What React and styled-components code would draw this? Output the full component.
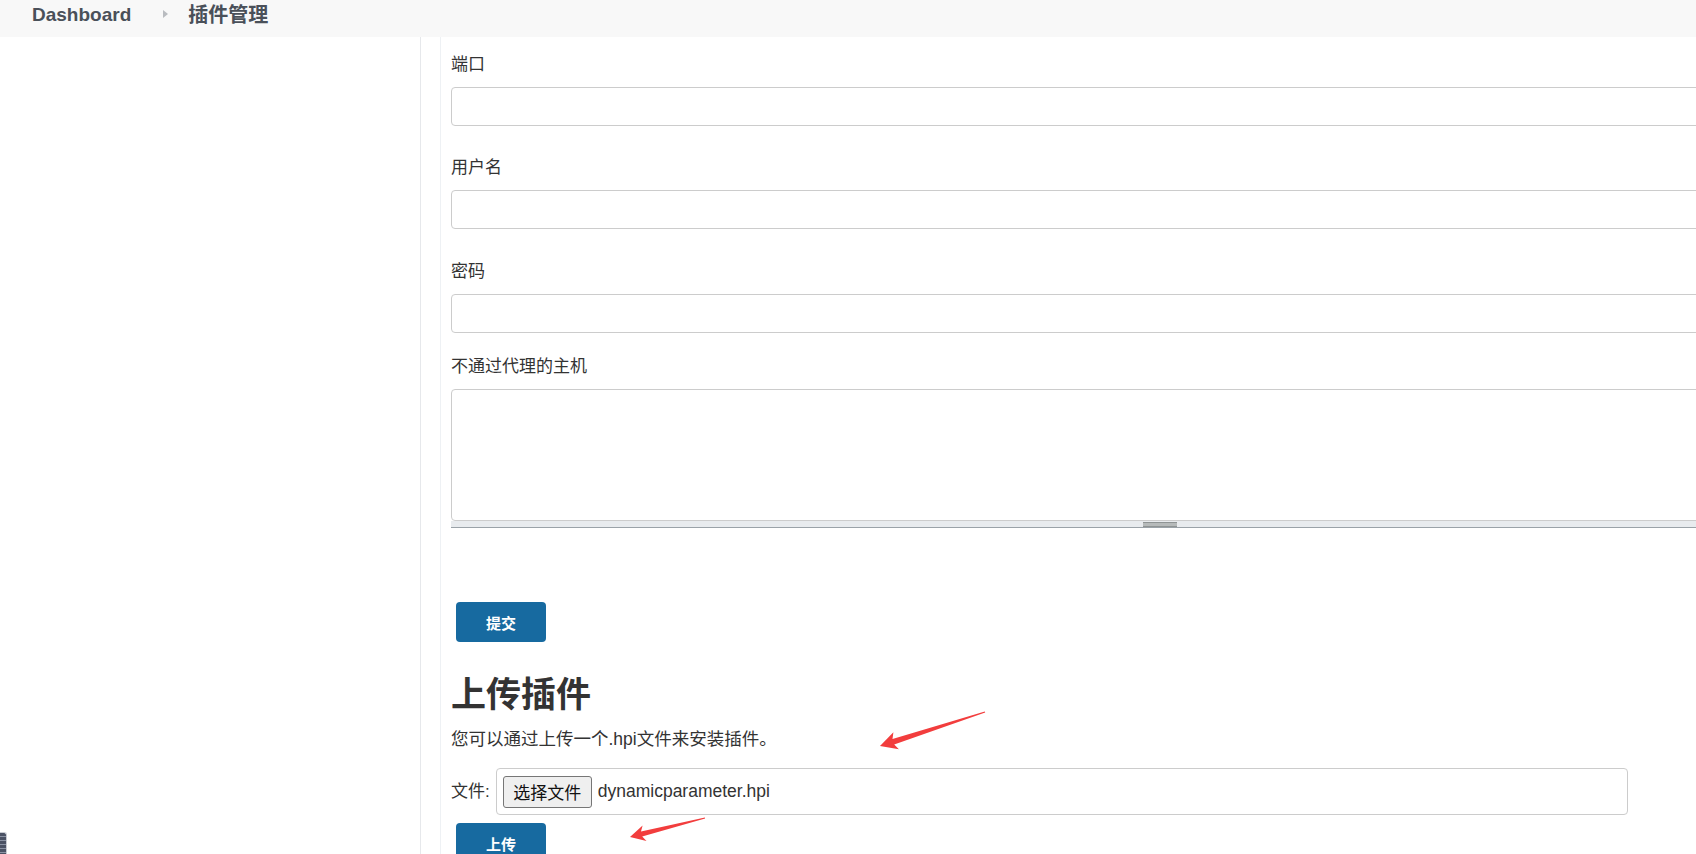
import React from "react";
import styled, { createGlobalStyle } from "styled-components";

const GlobalStyle = createGlobalStyle`
    html, body {
        margin: 0;
        padding: 0;
        background: #fff;
        overflow: hidden;
    }

    body {
        font-family: "Liberation Sans", "Noto Sans CJK SC", sans-serif;
        color: #333;
    }
`;

// arrow drawn as one tapered polygon, tail -> tip
const arrowPoints = (x1, y1, x2, y2, head, headHalf, shaft) => {
    const dx = x2 - x1;
    const dy = y2 - y1;
    const len = Math.hypot(dx, dy);
    const ux = dx / len;
    const uy = dy / len;
    const nx = -uy;
    const ny = ux;
    const bx = x2 - ux * head;
    const by = y2 - uy * head;
    const kx = x2 - ux * (head - 3);
    const ky = y2 - uy * (head - 3);
    const pts = [
        [x1 + nx * 0.6, y1 + ny * 0.6],
        [kx + nx * shaft, ky + ny * shaft],
        [bx + nx * headHalf, by + ny * headHalf],
        [x2, y2],
        [bx - nx * headHalf, by - ny * headHalf],
        [kx - nx * shaft, ky - ny * shaft],
        [x1 - nx * 0.6, y1 - ny * 0.6],
    ];
    return pts.map((p) => p.map((v) => v.toFixed(1)).join(",")).join(" ");
};

const fields = [
    { label: "端口", gap: 28 },
    { label: "用户名", gap: 29 },
    { label: "密码", gap: 20 },
];

const App = () => {
    return (
        <>
            <GlobalStyle />
            <Page>
                <Header>
                    <Crumb href="#" $size={19}>Dashboard</Crumb>
                    <Separator>
                        <svg width="5" height="8" viewBox="0 0 5 8">
                            <path d="M0 0 L5 4 L0 8 Z" fill="#b9bcc0" />
                        </svg>
                    </Separator>
                    <Crumb href="#" $size={20}>插件管理</Crumb>
                </Header>

                <Body>
                    <Sidebar />
                    <Main>
                        {fields.map((f) => (
                            <Field key={f.label} $gap={f.gap}>
                                <FieldLabel>{f.label}</FieldLabel>
                                <TextInput type="text" />
                            </Field>
                        ))}

                        <Field $gap={74}>
                            <FieldLabel>不通过代理的主机</FieldLabel>
                            <TextArea />
                            <ResizeBar>
                                <Grip />
                            </ResizeBar>
                        </Field>

                        <PrimaryButton>提交</PrimaryButton>

                        <SectionTitle>上传插件</SectionTitle>
                        <Description>您可以通过上传一个.hpi文件来安装插件。</Description>

                        <FileRow>
                            <FileLabel>文件:</FileLabel>
                            <FileBox>
                                <ChooseButton>选择文件</ChooseButton>
                                <FileName>dynamicparameter.hpi</FileName>
                            </FileBox>
                        </FileRow>

                        <UploadButton>上传</UploadButton>
                    </Main>
                </Body>

                <Annotations width="1696" height="854" viewBox="0 0 1696 854">
                    <polygon points={arrowPoints(985, 712, 880, 746, 17, 9, 2.8)} fill="#f23d3d" />
                    <polygon points={arrowPoints(705, 818, 630, 837, 15, 8, 2.5)} fill="#f23d3d" />
                </Annotations>

                <DockTab />
            </Page>
        </>
    );
};

export default App;

const Page = styled.div`
    position: relative;
    width: 1696px;
    height: 854px;
    overflow: hidden;
    display: flex;
    flex-direction: column;
`;

const Header = styled.header`
    flex: 0 0 37px;
    box-sizing: border-box;
    background: #f8f8f8;
    display: flex;
    align-items: flex-start;
    padding: 1px 0 0 32px;
`;

const Crumb = styled.a`
    font-size: ${({ $size }) => $size}px;
    font-weight: 700;
    line-height: 28px;
    color: #4a5059;
    text-decoration: none;
`;

const Separator = styled.span`
    display: flex;
    align-items: center;
    height: 26px;
    margin: 0 20px 0 32px;
`;

const Body = styled.div`
    flex: 1;
    display: flex;
    min-height: 0;
`;

const Sidebar = styled.aside`
    flex: 0 0 420px;
    border-right: 1px solid #e6e8eb;
`;

const Main = styled.main`
    flex: 1;
    margin-left: 19px;
    border-left: 1px solid #eef1f4;
    padding: 14px 0 0 10px;
`;

const Field = styled.div`
    margin-bottom: ${({ $gap }) => $gap}px;
`;

const FieldLabel = styled.label`
    display: block;
    height: 24px;
    margin-bottom: 12px;
    font-size: 17px;
    line-height: 28px;
    color: #333;
`;

const TextInput = styled.input`
    display: block;
    box-sizing: border-box;
    width: 1418px;
    height: 39px;
    margin: 0;
    padding: 0 8px;
    border: 1px solid #ccc;
    border-radius: 4px;
    background: #fff;
    font: inherit;
    font-size: 17px;
`;

const TextArea = styled.textarea`
    display: block;
    box-sizing: border-box;
    width: 1418px;
    height: 132px;
    margin: 0;
    padding: 6px 8px;
    border: 1px solid #ccc;
    border-radius: 4px;
    resize: none;
    font: inherit;
    font-size: 17px;
`;

const ResizeBar = styled.div`
    box-sizing: border-box;
    width: 1418px;
    height: 7px;
    background: #e8ebee;
    border-bottom: 1px solid #9aa2a8;
    display: flex;
    justify-content: center;
`;

const Grip = styled.div`
    box-sizing: border-box;
    width: 34px;
    height: 5px;
    margin-top: 1px;
    border-top: 1px solid #8f9494;
    border-bottom: 1px solid #8f9494;
    background: #b6baba;
`;

const PrimaryButton = styled.button`
    display: block;
    width: 90px;
    height: 40px;
    margin: 0 0 0 5px;
    padding: 0;
    border: none;
    border-radius: 4px;
    background: #176aa0;
    color: #fff;
    font-family: "Liberation Sans", "Noto Sans CJK SC", sans-serif;
    font-size: 15px;
    font-weight: 700;
    cursor: pointer;
`;

const UploadButton = styled(PrimaryButton)`
    margin-top: 8px;
`;

const SectionTitle = styled.h2`
    margin: 33px 0 0;
    font-size: 35px;
    line-height: 40px;
    font-weight: 700;
    color: #333;
`;

const Description = styled.p`
    margin: 12px 0 0;
    font-size: 17.5px;
    line-height: 24px;
    color: #333;
`;

const FileRow = styled.div`
    margin-top: 17px;
    display: flex;
    align-items: center;
    gap: 6px;
`;

const FileLabel = styled.span`
    font-size: 17px;
    line-height: 24px;
    color: #333;
`;

const FileBox = styled.div`
    box-sizing: border-box;
    width: 1132px;
    height: 47px;
    border: 1px solid #ccc;
    border-radius: 4px;
    display: flex;
    align-items: center;
    gap: 6px;
    padding-left: 6px;
`;

const ChooseButton = styled.button`
    box-sizing: border-box;
    width: 89px;
    height: 32px;
    padding: 0;
    border: 1px solid #767676;
    border-radius: 3px;
    background: #efefef;
    color: #111;
    font-family: "Liberation Sans", "Noto Sans CJK SC", sans-serif;
    font-size: 17px;
`;

const FileName = styled.span`
    font-size: 17.5px;
    color: #333;
`;

const Annotations = styled.svg`
    position: absolute;
    top: 0;
    left: 0;
    pointer-events: none;
`;

const DockTab = styled.div`
    position: absolute;
    left: 0;
    bottom: 0;
    width: 7px;
    height: 22px;
    box-sizing: border-box;
    border-top: 1px solid #c9ccd3;
    border-right: 1px solid #c9ccd3;
    border-radius: 0 3px 0 0;
    background: repeating-linear-gradient(
        to bottom,
        #4b5264 0 3px,
        #8b93a4 3px 4px
    );
`;
